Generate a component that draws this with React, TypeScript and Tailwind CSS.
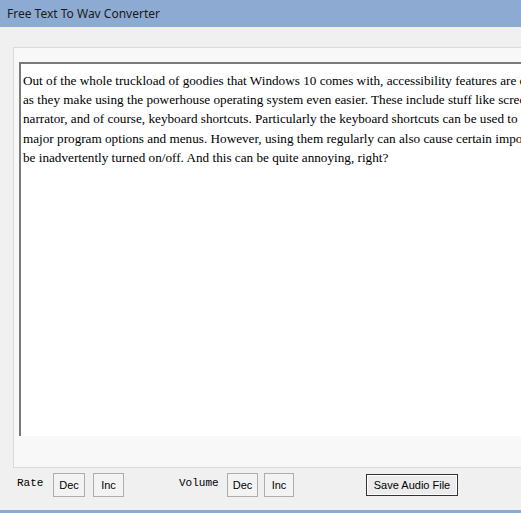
import React from 'react';

const LINES = [
  'Out of the whole truckload of goodies that Windows 10 comes with, accessibility features are certainly',
  'as they make using the powerhouse operating system even easier. These include stuff like screen',
  'narrator, and of course, keyboard shortcuts. Particularly the keyboard shortcuts can be used to',
  'major program options and menus. However, using them regularly can also cause certain important',
  'be inadvertently turned on/off. And this can be quite annoying, right?',
];

const SmallButton: React.FC<{ label: string; className?: string }> = ({ label, className = '' }) => (
  <button
    className={`h-[24px] border border-[#adadad] bg-[#f3f3f3] text-[11px] text-black font-['Liberation_Sans',sans-serif] flex items-center justify-center ${className}`}
  >
    {label}
  </button>
);

export default function App() {
  return (
    <div className="w-[521px] h-[513px] overflow-hidden bg-[#f0f0f0] flex flex-col border-b-[3px] border-[#8daad3]">
      {/* window caption */}
      <div className="h-[27px] shrink-0 bg-[#8daad3] flex items-center pl-[7px]">
        <span className="text-[12px] text-[#1a1a1a] font-['Noto_Sans',sans-serif] leading-none">
          Free Text To Wav Converter
        </span>
      </div>

      {/* text panel */}
      <div className="pt-[20px] pl-[13px]">
        <div className="w-[560px] h-[421px] border border-[#dadada] bg-[#f8f8f8] pt-[14px] pl-[5px]">
          <div className="h-[374px] bg-white border-t-2 border-l-2 border-[#7a7a7a] pt-[7px] pl-[2px] overflow-hidden">
            {LINES.map((line) => (
              <div
                key={line}
                className="whitespace-nowrap text-[13.2px] leading-[19.2px] text-black font-['Liberation_Serif',serif]"
              >
                {line}
              </div>
            ))}
          </div>
        </div>
      </div>

      {/* speech controls */}
      <div className="mt-[5px] pl-[17px] flex items-center h-[24px]">
        <span className="w-[36px] -mt-[4px] text-[11px] text-black font-['Liberation_Mono',monospace]">Rate</span>
        <SmallButton label="Dec" className="w-[32px]" />
        <SmallButton label="Inc" className="w-[31px] ml-[8px]" />
        <span className="w-[48px] -mt-[4px] ml-[55px] text-[11px] text-black font-['Liberation_Mono',monospace]">Volume</span>
        <SmallButton label="Dec" className="w-[31px]" />
        <SmallButton label="Inc" className="w-[30px] ml-[6px]" />
        <button className="ml-[72px] w-[92px] h-[22px] border border-[#333] bg-[#ececec] shadow-[inset_0_0_0_1px_#ffffff] text-[11px] text-black font-['Liberation_Sans',sans-serif]">
          Save Audio File
        </button>
      </div>
    </div>
  );
}
